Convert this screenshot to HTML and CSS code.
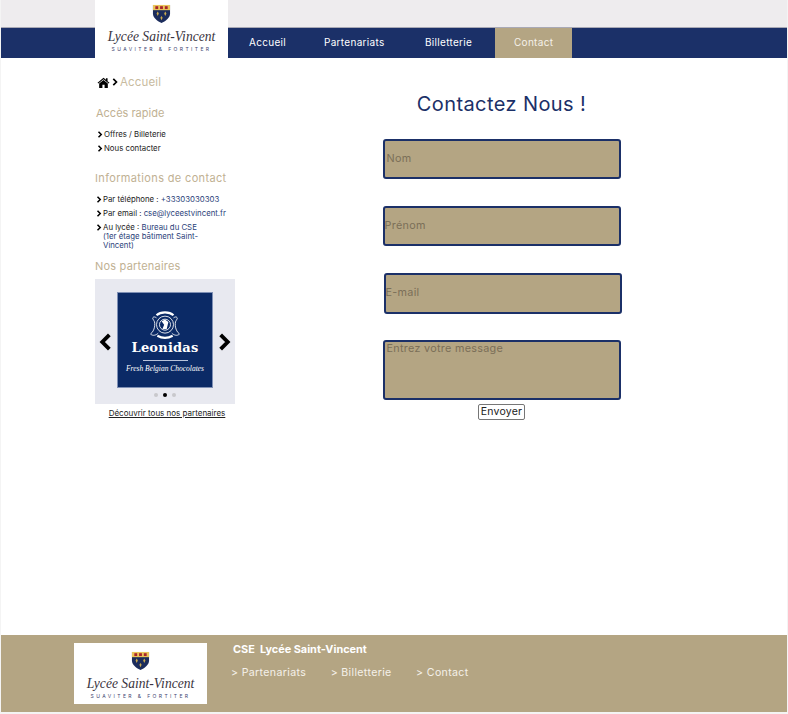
FILE: index.html
```html
<!DOCTYPE html>
<html lang="fr">
<head>
    <meta charset="UTF-8">
    <meta name="viewport" content="width=device-width, initial-scale=1.0">
    <title>CSE Lycée Saint-Vincent - Contact</title>
    <link rel="stylesheet" href="styles.css">
</head>
<body>

<svg class="sprites" width="0" height="0" aria-hidden="true">
    <symbol id="crest" viewBox="0 0 20 20">
        <path d="M1 1H19V10C19 15 14 18 10 20C6 18 1 15 1 10Z" fill="#1b2c5c"/>
        <path d="M1 1H19V6.5H1Z" fill="#e8c45a"/>
        <rect x="3.5" y="2.3" width="3" height="3" fill="#a8262c"/>
        <rect x="8.5" y="2.3" width="3" height="3" fill="#a8262c"/>
        <rect x="13.5" y="2.3" width="3" height="3" fill="#a8262c"/>
        <path d="M6 8L7.2 10L6 12.5L4.8 10Z" fill="#c9a94e"/>
        <path d="M14 8L15.2 10L14 12.5L12.8 10Z" fill="#c9a94e"/>
        <path d="M10 12.5L11.2 14.5L10 17L8.8 14.5Z" fill="#c9a94e"/>
    </symbol>
    <symbol id="chevron" viewBox="0 0 10 14">
        <path d="M2 1.5L7.5 7L2 12.5" fill="none" stroke="currentColor" stroke-width="3"/>
    </symbol>
</svg>

<div id="page">
    <header id="header">
        <div class="logo logoTop">
            <svg class="crest"><use href="#crest"/></svg>
            <div class="logoName">Lycée Saint-Vincent</div>
            <div class="logoMotto">SUAVITER &amp; FORTITER</div>
        </div>
        <div id="topBand"></div>
        <nav id="nav">
            <a class="navItem navAccueil" href="#">Accueil</a>
            <a class="navItem navPartenariats" href="#">Partenariats</a>
            <a class="navItem navBilletterie" href="#">Billetterie</a>
            <a class="navItem navActive" href="#">Contact</a>
        </nav>
    </header>

    <main id="main">
        <aside id="sidebar">
            <div class="breadcrumb">
                <svg class="homeIcon" viewBox="0 0 24 20">
                    <path d="M12 1L1 10.5L2.5 12L12 4L21.5 12L23 10.5L19.5 7.5V2H16.5V5Z" fill="#000"/>
                    <path d="M12 5.5L4 12V20H10V14H14V20H20V12Z" fill="#000"/>
                </svg>
                <svg class="crumbChevron"><use href="#chevron"/></svg>
                <span>Accueil</span>
            </div>

            <h3 class="sideTitle firstTitle">Accès rapide</h3>
            <ul class="sideList">
                <li><svg class="bullet"><use href="#chevron"/></svg><span>Offres / Billeterie</span></li>
                <li><svg class="bullet"><use href="#chevron"/></svg><span>Nous contacter</span></li>
            </ul>

            <h3 class="sideTitle contactTitle">Informations de contact</h3>
            <ul class="sideList">
                <li><svg class="bullet"><use href="#chevron"/></svg><span>Par téléphone : <a href="#">+33303030303</a></span></li>
                <li><svg class="bullet"><use href="#chevron"/></svg><span>Par email : <a href="#">cse@lyceestvincent.fr</a></span></li>
                <li><svg class="bullet"><use href="#chevron"/></svg><span>Au lycée : <a href="#">Bureau du CSE<br>(1er étage bâtiment Saint-<br>Vincent)</a></span></li>
            </ul>

            <h3 class="sideTitle partnersTitle">Nos partenaires</h3>
            <div class="carousel">
                <div class="slideRow">
                    <svg class="arrow arrowLeft"><use href="#chevron"/></svg>
                    <div class="partnerCard">
                        <svg class="leoCrest" viewBox="0 0 40 36">
                            <g fill="none" stroke="#fff" stroke-width="1">
                                <circle cx="20" cy="17" r="10"/>
                                <circle cx="20" cy="17" r="6.5"/>
                                <path d="M10 9C6 6 4 10 7 12C9 16 8 24 3 28C6 31 10 29 12 27"/>
                                <path d="M30 9C34 6 36 10 33 12C31 16 32 24 37 28C34 31 30 29 28 27"/>
                                <path d="M11 30C17 33.5 23 33.5 29 30" stroke-width="2.6"/>
                                <path d="M10 6C15 1.5 25 1.5 30 6" stroke-width="2.6"/>
                            </g>
                            <path d="M16 13L20 11L24 14L22 22L17 22L19 17Z" fill="#fff"/>
                        </svg>
                        <div class="leoName">Leonidas</div>
                        <div class="leoLine"></div>
                        <div class="leoTag">Fresh Belgian Chocolates</div>
                    </div>
                    <svg class="arrow"><use href="#chevron"/></svg>
                </div>
                <div class="dots">
                    <span class="dot"></span>
                    <span class="dot dotActive"></span>
                    <span class="dot"></span>
                </div>
            </div>
            <a class="allPartners" href="#">Découvrir tous nos partenaires</a>
        </aside>

        <section id="content">
            <h1 id="title">Contactez Nous !</h1>
            <form id="contactForm">
                <input class="field" type="text" placeholder="Nom">
                <input class="field fieldPrenom" type="text" placeholder="Prénom">
                <input class="field fieldMail" type="email" placeholder="E-mail">
                <textarea class="field fieldMessage" placeholder="Entrez votre message"></textarea>
                <button id="sendButton" type="button">Envoyer</button>
            </form>
        </section>
    </main>

    <footer id="footer">
        <div class="logo logoBottom">
            <svg class="crest"><use href="#crest"/></svg>
            <div class="logoName">Lycée Saint-Vincent</div>
            <div class="logoMotto">SUAVITER &amp; FORTITER</div>
        </div>
        <div class="footerText">
            <div class="footerTitle">CSE&nbsp; Lycée Saint-Vincent</div>
            <div class="footerLinks">
                <a href="#">&gt; Partenariats</a>
                <a href="#">&gt; Billetterie</a>
                <a href="#">&gt; Contact</a>
            </div>
        </div>
    </footer>
</div>

</body>
</html>
```

FILE: styles.css
```css
* {
    box-sizing: border-box;
}
body {
    margin: 0;
    background-color: #f4f4f4;
    font-family: Inter, "Open Sans", sans-serif;
    color: #000;
}
a {
    color: inherit;
    text-decoration: none;
}
.sprites {
    position: absolute;
}

#page {
    margin: 0 1px;
    height: 712px;
    background-color: #fff;
    display: flex;
    flex-direction: column;
}

/* header */
#header {
    position: relative;
    height: 58px;
    flex: none;
}
#topBand {
    height: 28px;
    background-color: #eeecee;
    border-bottom: 1px solid #a9a9b5;
}
#nav {
    height: 30px;
    background-color: #1b3068;
    padding-left: 227px;
    display: flex;
}
.navItem {
    color: #fff;
    font-size: 10px;
    letter-spacing: 0.3px;
    line-height: 29px;
}
.navAccueil {
    width: 76px;
    padding-left: 21px;
}
.navPartenariats {
    width: 101px;
    padding-left: 20px;
}
.navBilletterie {
    width: 90px;
    padding-left: 20px;
}
.navActive {
    background-color: #b4a583;
    padding: 0 19px;
    color: #f4f1ea;
    width: 77px;
}

/* logo block */
.logo {
    background-color: #fff;
    width: 133px;
    display: flex;
    flex-direction: column;
    align-items: center;
}
.logoTop {
    position: absolute;
    left: 94px;
    top: 0;
    height: 58px;
    padding-top: 4px;
    z-index: 2;
}
.logoBottom {
    height: 61px;
    padding-top: 8px;
    flex: none;
}
.crest {
    width: 19px;
    height: 19px;
}
.logoName {
    font-family: "Liberation Serif", serif;
    font-style: italic;
    font-size: 13.6px;
    line-height: 16px;
    margin-top: 6px;
    color: #3a3440;
    white-space: nowrap;
}
.logoMotto {
    font-size: 5px;
    letter-spacing: 2.4px;
    line-height: 7px;
    margin-top: 1px;
    color: #3d4470;
    white-space: nowrap;
}

/* main */
#main {
    flex: 1;
    display: flex;
    padding-left: 94px;
}
#sidebar {
    width: 140px;
    flex: none;
}
.breadcrumb {
    display: flex;
    align-items: center;
    height: 16px;
    margin-top: 16px;
    padding-left: 2px;
    font-size: 11.5px;
    letter-spacing: 0.15px;
    color: #c8bb9f;
}
.homeIcon {
    width: 13px;
    height: 11px;
}
.crumbChevron {
    width: 6px;
    height: 8px;
    margin: 0 2px 0 2px;
    color: #000;
}
.sideTitle {
    font-size: 11px;
    font-weight: 400;
    letter-spacing: 0.35px;
    line-height: 14px;
    margin: 0;
    color: #bfb193;
}
.firstTitle {
    margin: 16px 0 0 1px;
    letter-spacing: 0;
}
.contactTitle {
    margin-top: 18px;
}
.partnersTitle {
    margin-top: 8.5px;
    letter-spacing: 0.2px;
}
.sideList {
    list-style: none;
    margin: 10px 0 0;
    padding: 0;
    font-size: 7.8px;
    line-height: 9px;
    color: #222;
}
.firstTitle + .sideList {
    margin-left: 1px;
}
.sideList li {
    display: flex;
    align-items: flex-start;
    margin-bottom: 5px;
    white-space: nowrap;
}
.sideList a {
    color: #2b3f7a;
}
.bullet {
    width: 6px;
    height: 7px;
    margin: 1px 1px 0 1px;
    flex: none;
    color: #000;
}

/* carousel */
.carousel {
    margin-top: 6px;
    height: 125px;
    background-color: #e8e9f0;
    padding-top: 13px;
}
.slideRow {
    display: flex;
    align-items: center;
    justify-content: space-between;
    padding: 0 4px;
}
.arrow {
    width: 13px;
    height: 18px;
    margin-top: 4px;
    color: #000;
}
.arrowLeft {
    transform: scaleX(-1);
}
.partnerCard {
    width: 96px;
    height: 96px;
    background-color: #0b2a66;
    border: 1px solid #7f90b5;
    color: #fff;
    display: flex;
    flex-direction: column;
    align-items: center;
    padding-top: 17px;
}
.leoCrest {
    width: 34px;
    height: 31px;
}
.leoName {
    font-family: "DejaVu Serif", serif;
    font-weight: 700;
    font-size: 13px;
    line-height: 16px;
    letter-spacing: 0.2px;
    margin-top: -1px;
}
.leoLine {
    width: 45px;
    height: 1px;
    background-color: #b9c3da;
    margin-top: 4px;
}
.leoTag {
    font-family: "Liberation Serif", serif;
    font-style: italic;
    font-size: 7.5px;
    line-height: 10px;
    margin-top: 3px;
    white-space: nowrap;
}
.dots {
    display: flex;
    justify-content: center;
    gap: 5px;
    margin-top: 5px;
}
.dot {
    width: 4px;
    height: 4px;
    border-radius: 50%;
    background-color: #c8c8cc;
}
.dotActive {
    background-color: #000;
}
.allPartners {
    display: block;
    margin-top: 4px;
    padding-left: 4px;
    text-align: center;
    font-size: 8px;
    line-height: 10px;
    text-decoration: underline;
    color: #222;
}

/* form */
#content {
    width: 239px;
    margin-left: 147px;
}
#title {
    margin: 33px 0 0;
    font-size: 20px;
    font-weight: 400;
    line-height: 26px;
    letter-spacing: 0.4px;
    text-align: center;
    white-space: nowrap;
    color: #1b3068;
}
#contactForm {
    display: flex;
    flex-direction: column;
    align-items: center;
    margin-top: 22px;
}
.field {
    display: block;
    width: 238px;
    height: 40px;
    margin: 0 0 27px;
    padding: 0 0 2px 2px;
    background-color: #b4a583;
    border: 2px solid #1b3068;
    border-radius: 3px;
    font-family: inherit;
    font-size: 10.8px;
    letter-spacing: 0.3px;
    color: #333;
}
.field::placeholder {
    color: #7b6f58;
    opacity: 1;
}
.fieldPrenom {
    padding-left: 0;
}
.fieldMail {
    height: 41px;
    padding-left: 0;
    margin-left: 2px;
    margin-bottom: 26px;
}
.fieldMessage {
    height: 60px;
    padding: 0 0 0 2px;
    margin-bottom: 4px;
    resize: none;
}
#sendButton {
    width: 47px;
    height: 16px;
    padding: 0;
    background-color: #fff;
    border: 1px solid #767676;
    border-radius: 2px;
    font-family: inherit;
    font-size: 10.5px;
    letter-spacing: 0.2px;
    line-height: 14px;
    color: #222;
}

/* footer */
#footer {
    flex: none;
    height: 77px;
    background-color: #b4a583;
    padding: 8px 0 0 73px;
    display: flex;
}
.footerText {
    margin-left: 24px;
    color: #fff;
}
.footerTitle {
    font-size: 10.9px;
    font-weight: 700;
    line-height: 13px;
    margin-left: 2px;
}
.footerLinks {
    display: flex;
    gap: 24.5px;
    margin-top: 10px;
    font-size: 10.6px;
    letter-spacing: 0.35px;
    line-height: 14px;
    color: #f4f1ea;
}
```
